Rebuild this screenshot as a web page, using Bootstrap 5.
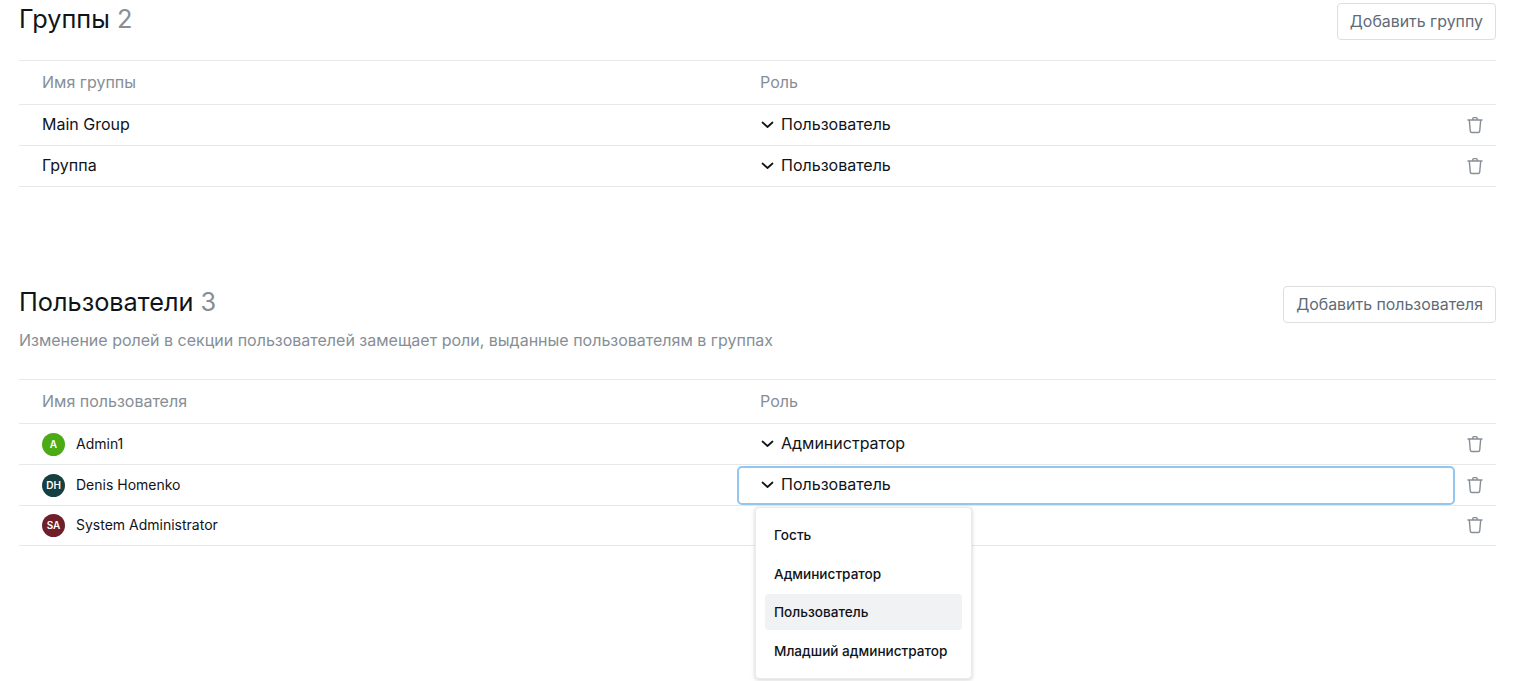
<!DOCTYPE html>
<html lang="ru">
<head>
  <meta charset="UTF-8" />
  <meta name="viewport" content="width=device-width, initial-scale=1.0" />
  <title>Группы и пользователи</title>
  <link rel="stylesheet" href="https://cdn.jsdelivr.net/npm/bootstrap@5.3.3/dist/css/bootstrap.min.css" />
  <style>
    body { font-family: Inter, "Liberation Sans", sans-serif; color: #0f1419; background: #fff; overflow: hidden; }
    #page { padding: 3px 19px 0; }
    .sec-title { font-size: 25.3px; line-height: 32px; font-weight: 400; margin: 0; color: #0f1419; }
    .sec-count { color: #868e96; }
    .sec-note { font-size: 16px; line-height: 20px; color: #868e96; margin: 12px 0 0; }
    .btn-add { font-size: 15.9px; line-height: 22px; padding: 6.5px 12px; color: #5f6b76; border: 1px solid #dcdfe2; border-radius: 4px; background: #fff; }
    .role-table { table-layout: fixed; width: 100%; margin: 0; border-top: 1px solid #e6e8ea; font-size: 16px; --bs-table-color: #0f1419; }
    .role-table th, .role-table td { padding: 0; border-bottom: 1px solid #e6e8ea; vertical-align: middle; box-shadow: none; }
    .role-table th { height: 44px; font-weight: 400; color: #868e96; padding-bottom: 2px; }
    .role-table td { height: 41px; font-weight: 400; }
    .role-table td.plain-name { padding-bottom: 2px; }
    .role-table tr.last-row td { height: 40px; }
    .col-name { padding-left: 23px !important; }
    .col-role { padding-left: 22px !important; }
    .role-cell { display: flex; align-items: center; gap: 6px; padding-bottom: 2px; }
    .role-focus { height: 39px; margin: 0 -1px; padding-left: 23px; border: 2px solid #94c6f2; border-radius: 5px; }
    .role-focus-td { padding-left: 0 !important; }
    .role-focus .role-cell { height: 100%; margin-left: -2px; }
    .avatar { width: 23px; height: 23px; font-size: 10px; font-weight: 600; color: #fff; border-radius: 50%; }
    .user-name { font-size: 14px; font-weight: 400; margin-left: 3px; position: relative; top: -1px; }
    .trash-cell { text-align: right; padding-right: 13px !important; }
    .trash-cell svg { display: inline-block; vertical-align: middle; position: relative; top: -2px; }
    .role-menu { display: block; position: absolute; left: 755px; top: 507px; width: 217px; min-width: 0; height: 172px; padding: 9px 9px; border: 1px solid #e9ebed; border-radius: 4px; box-shadow: 0 1px 4px rgba(0,0,0,.18); }
    .role-menu .dropdown-item { font-size: 13.6px; font-weight: 500; color: #0f1419; height: 36px; line-height: 36px; padding: 0 9px; margin-bottom: 2.6px; border-radius: 4px; white-space: nowrap; }
    .role-menu .dropdown-item.is-current { background: #f1f2f4; }
  </style>
</head>
<body>
  <div id="page">
    <div class="d-flex justify-content-between align-items-start" style="height:57px">
      <h2 class="sec-title">Группы <span class="sec-count">2</span></h2>
      <button class="btn btn-add">Добавить группу</button>
    </div>
    <table class="table role-table">
      <colgroup><col style="width:719px" /><col /><col style="width:42px" /></colgroup>
      <tr><th class="col-name">Имя группы</th><th class="col-role">Роль</th><th></th></tr>
      <tr>
        <td class="col-name plain-name">Main Group</td>
        <td class="col-role"><div class="role-cell"><svg width="15" height="15" viewBox="0 0 15 15" fill="none" stroke="#0f1419" stroke-width="1.7" stroke-linecap="round" stroke-linejoin="round"><path d="M2.500 5.500l5 4.500 5-4.500" /></svg>Пользователь</div></td>
        <td class="trash-cell"><svg width="16" height="18" viewBox="0 0 16 18" fill="none" stroke="#868e96" stroke-width="1.4" stroke-linecap="round" stroke-linejoin="round"><path d="M1 4h14M2.3 4l1 11.2a1.5 1.5 0 0 0 1.5 1.3h6.4a1.5 1.5 0 0 0 1.5-1.3L13.700 4M5.800 4V2.600a1 1 0 0 1 1-1h2.400a1 1 0 0 1 1 1V4" /></svg></td>
      </tr>
      <tr>
        <td class="col-name plain-name">Группа</td>
        <td class="col-role"><div class="role-cell"><svg width="15" height="15" viewBox="0 0 15 15" fill="none" stroke="#0f1419" stroke-width="1.7" stroke-linecap="round" stroke-linejoin="round"><path d="M2.500 5.500l5 4.500 5-4.500" /></svg>Пользователь</div></td>
        <td class="trash-cell"><svg width="16" height="18" viewBox="0 0 16 18" fill="none" stroke="#868e96" stroke-width="1.4" stroke-linecap="round" stroke-linejoin="round"><path d="M1 4h14M2.3 4l1 11.2a1.5 1.5 0 0 0 1.5 1.3h6.4a1.5 1.5 0 0 0 1.5-1.3L13.700 4M5.800 4V2.600a1 1 0 0 1 1-1h2.400a1 1 0 0 1 1 1V4" /></svg></td>
      </tr>
    </table>

    <div class="d-flex justify-content-between align-items-start" style="margin-top:99px;height:93px">
      <div>
        <h2 class="sec-title">Пользователи <span class="sec-count">3</span></h2>
        <p class="sec-note">Изменение ролей в секции пользователей замещает роли, выданные пользователям в группах</p>
      </div>
      <button class="btn btn-add">Добавить пользователя</button>
    </div>
    <table class="table role-table">
      <colgroup><col style="width:719px" /><col /><col style="width:42px" /></colgroup>
      <tr><th class="col-name">Имя пользователя</th><th class="col-role">Роль</th><th></th></tr>
      <tr>
        <td class="col-name"><div class="d-flex align-items-center gap-2"><span class="avatar d-flex align-items-center justify-content-center" style="background:#4caa14">A</span><span class="user-name">Admin1</span></div></td>
        <td class="col-role"><div class="role-cell"><svg width="15" height="15" viewBox="0 0 15 15" fill="none" stroke="#0f1419" stroke-width="1.7" stroke-linecap="round" stroke-linejoin="round"><path d="M2.500 5.500l5 4.500 5-4.500" /></svg>Администратор</div></td>
        <td class="trash-cell"><svg width="16" height="18" viewBox="0 0 16 18" fill="none" stroke="#868e96" stroke-width="1.4" stroke-linecap="round" stroke-linejoin="round"><path d="M1 4h14M2.3 4l1 11.2a1.5 1.5 0 0 0 1.5 1.3h6.4a1.5 1.5 0 0 0 1.5-1.3L13.700 4M5.800 4V2.600a1 1 0 0 1 1-1h2.400a1 1 0 0 1 1 1V4" /></svg></td>
      </tr>
      <tr>
        <td class="col-name"><div class="d-flex align-items-center gap-2"><span class="avatar d-flex align-items-center justify-content-center" style="background:#163f41">DH</span><span class="user-name">Denis Homenko</span></div></td>
        <td class="role-focus-td"><div class="role-focus"><div class="role-cell"><svg width="15" height="15" viewBox="0 0 15 15" fill="none" stroke="#0f1419" stroke-width="1.7" stroke-linecap="round" stroke-linejoin="round"><path d="M2.500 5.500l5 4.500 5-4.500" /></svg>Пользователь</div></div></td>
        <td class="trash-cell"><svg width="16" height="18" viewBox="0 0 16 18" fill="none" stroke="#868e96" stroke-width="1.4" stroke-linecap="round" stroke-linejoin="round"><path d="M1 4h14M2.3 4l1 11.2a1.5 1.5 0 0 0 1.5 1.3h6.4a1.5 1.5 0 0 0 1.5-1.3L13.700 4M5.800 4V2.600a1 1 0 0 1 1-1h2.400a1 1 0 0 1 1 1V4" /></svg></td>
      </tr>
      <tr class="last-row">
        <td class="col-name"><div class="d-flex align-items-center gap-2"><span class="avatar d-flex align-items-center justify-content-center" style="background:#6f1f29">SA</span><span class="user-name">System Administrator</span></div></td>
        <td></td>
        <td class="trash-cell"><svg width="16" height="18" viewBox="0 0 16 18" fill="none" stroke="#868e96" stroke-width="1.4" stroke-linecap="round" stroke-linejoin="round"><path d="M1 4h14M2.3 4l1 11.2a1.5 1.5 0 0 0 1.5 1.3h6.4a1.5 1.5 0 0 0 1.5-1.3L13.700 4M5.800 4V2.600a1 1 0 0 1 1-1h2.400a1 1 0 0 1 1 1V4" /></svg></td>
      </tr>
    </table>
  </div>

  <ul class="dropdown-menu role-menu">
    <li><a class="dropdown-item" href="#">Гость</a></li>
    <li><a class="dropdown-item" href="#">Администратор</a></li>
    <li><a class="dropdown-item is-current" href="#">Пользователь</a></li>
    <li><a class="dropdown-item" href="#">Младший администратор</a></li>
  </ul>

  <script src="https://cdn.jsdelivr.net/npm/bootstrap@5.3.3/dist/js/bootstrap.bundle.min.js"></script>
</body>
</html>
